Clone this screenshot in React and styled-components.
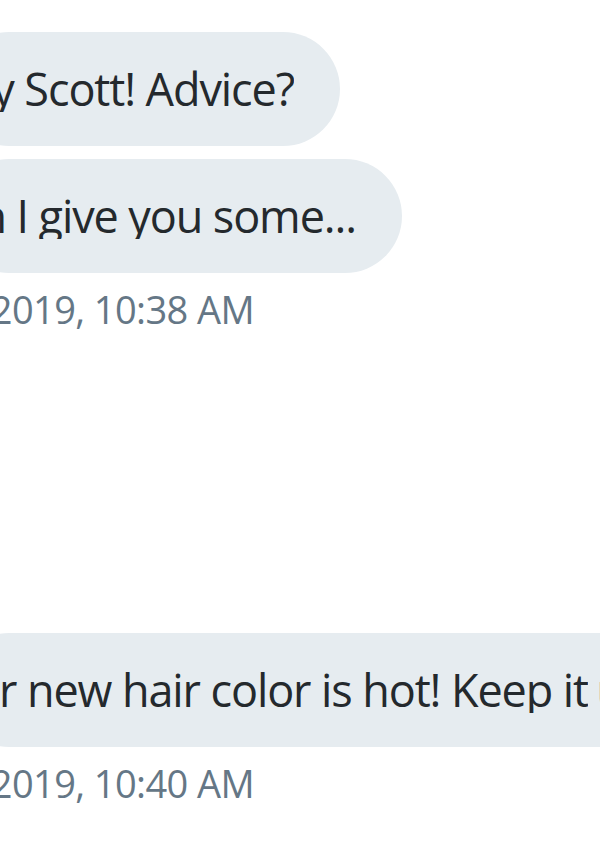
import React from "react";
import styled, { createGlobalStyle } from "styled-components";

const Global = createGlobalStyle`
  html, body { margin: 0; padding: 0; background: #ffffff; overflow: hidden; }
  body { width: 600px; height: 862px; }
`;

const Page = styled.div`
  width: 600px;
  height: 862px;
  overflow: hidden;
  background: #ffffff;
  font-family: "Open Sans", "Segoe UI", "Noto Sans", sans-serif;
`;

const Thread = styled.div`
  display: flex;
  flex-direction: column;
  align-items: flex-start;
  margin-left: -48px;
  padding-top: 32px;
`;

const Bubble = styled.div`
  display: flex;
  align-items: center;
  flex: none;
  background: #e6ecf0;
  color: #24292d;
  font-size: 45px;
  font-weight: 370;
  letter-spacing: -1.1px;
  line-height: 46px;
  padding: 34px 46px;
  border-radius: 57px;
  margin-top: ${(p) => p.$gap || 0}px;
  white-space: nowrap;
`;

const Clip = styled.div`
  display: flex;
  justify-content: flex-end;
  overflow: hidden;
  white-space: nowrap;
  flex: none;
`;

const Rest = styled.span`
  flex: none;
  white-space: pre;
  word-spacing: -2px;
`;

const Stamp = styled.div`
  color: #657786;
  font-size: 38px;
  font-weight: 370;
  letter-spacing: -0.6px;
  line-height: 48px;
  margin-top: 12px;
`;

const Line = ({ w, children }) => (
  <Clip style={{ width: w }}>
    <span>{children}</span>
  </Clip>
);

export default function App() {
  return (
    <Page>
      <Global />
      <Thread>
        <Bubble>
          <Line w={296}>Hey Scott! Advice?</Line>
        </Bubble>
        <Bubble $gap={13}>
          <Line w={358}>Can I give you some...</Line>
        </Bubble>
        <Stamp>
          <Line w={302}>Jan 16, 2019, 10:38 AM</Line>
        </Stamp>
        <Bubble $gap={300}>
          <Line w={590}>Your new hair color is hot! Keep it</Line>
          <Rest>{" up!"}</Rest>
        </Bubble>
        <Stamp>
          <Line w={302}>Jan 16, 2019, 10:40 AM</Line>
        </Stamp>
      </Thread>
    </Page>
  );
}
